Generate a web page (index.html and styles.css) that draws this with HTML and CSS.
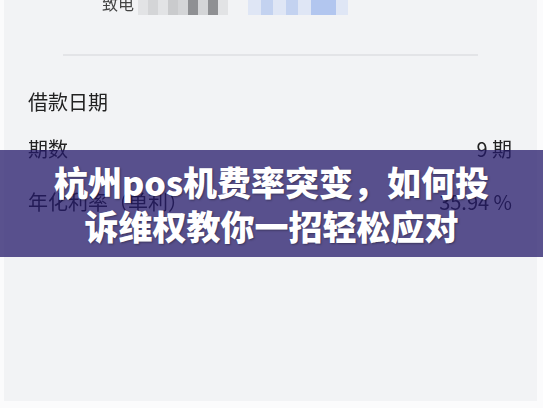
FILE: index.html
```html
<!DOCTYPE html>
<html lang="zh-CN">
<head>
  <meta charset="UTF-8">
  <title>杭州pos机费率突变，如何投诉维权教你一招轻松应对</title>
  <meta name="viewport" content="width=device-width, initial-scale=1.0">
  <link rel="stylesheet" href="styles.css">
</head>
<body>

  <!-- Blurred phone screenshot -->
  <div class="screen">
    <div class="contact">
      <span class="contact-label">致电</span>
      <span class="mosaic">
        <i class="m1"></i><i class="m2"></i><i class="m1"></i><i class="m3"></i><i class="m2"></i><i class="m4"></i><i class="m2"></i><i class="m4"></i><i class="m1"></i>
      </span>
      <span class="mosaic blue">
        <i class="b1"></i><i class="b2"></i><i class="b1"></i><i class="b2"></i><i class="b1"></i><i class="b3"></i><i class="b3"></i><i class="b1"></i>
      </span>
    </div>

    <div class="divider"></div>

    <div class="section-title">借款日期</div>

    <div class="row first">
      <span>期数</span>
      <span>9 期</span>
    </div>
    <div class="row">
      <span>年化利率（单利）</span>
      <span>35.94 %</span>
    </div>
  </div>

  <!-- Title banner -->
  <div class="banner">
    <h1>杭州pos机费率突变，如何投<br>诉维权教你一招轻松应对</h1>
  </div>

</body>
</html>
```

FILE: styles.css
```css
/* Reset */
* {
  margin: 0;
  padding: 0;
  box-sizing: border-box;
}

html, body {
  height: 100%;
  overflow: hidden;
}

body {
  position: relative;
  background-color: #fbfbfc;
  font-family: "Noto Sans CJK SC", "Noto Sans", sans-serif;
}

/* Phone screenshot */
.screen {
  height: 100%;
  margin: 0 6px 0 4px;
  padding: 0 25px 0 24px;
  background-color: #f2f3f5;
  color: #222;
  filter: blur(0.45px);
}

.contact {
  display: flex;
  align-items: center;
  height: 20px;
  margin-top: -7px;
  padding-left: 74px;
}

.contact-label {
  font-size: 16px;
  color: #444;
  margin-right: 4px;
}

.mosaic {
  display: flex;
  height: 18px;
  margin-top: 6px;
}

.mosaic i {
  display: block;
  width: 10px;
  height: 100%;
}

.m1 { background: #e2e3e5; }
.m2 { background: #d4d5d7; }
.m3 { background: #cacbcd; }
.m4 { background: #8f9093; }

.mosaic.blue {
  margin-left: 20px;
}

.mosaic.blue i {
  width: 12.5px;
}

.b1 { background: #dfe6f5; }
.b2 { background: #c3d2f0; }
.b3 { background: #b2c6ef; }

.divider {
  height: 2px;
  margin: 41px 34px 0 35px;
  background-color: #e3e4e7;
}

.section-title {
  font-size: 20px;
  line-height: 28px;
  margin-top: 32px;
}

.row {
  display: flex;
  justify-content: space-between;
  font-size: 20px;
  line-height: 28px;
  margin-top: 25px;
}

.row.first {
  margin-top: 19px;
}

/* Title banner over the screenshot */
.banner {
  position: absolute;
  top: 150px;
  left: 0;
  right: 0;
  height: 107px;
  display: flex;
  align-items: center;
  justify-content: center;
  background-color: rgba(36, 26, 106, 0.75);
}

.banner h1 {
  color: #fff;
  font-size: 34px;
  font-weight: 900;
  line-height: 44px;
  text-align: center;
  text-shadow: 1px 1px 2px rgba(0, 0, 0, 0.35);
}
```
